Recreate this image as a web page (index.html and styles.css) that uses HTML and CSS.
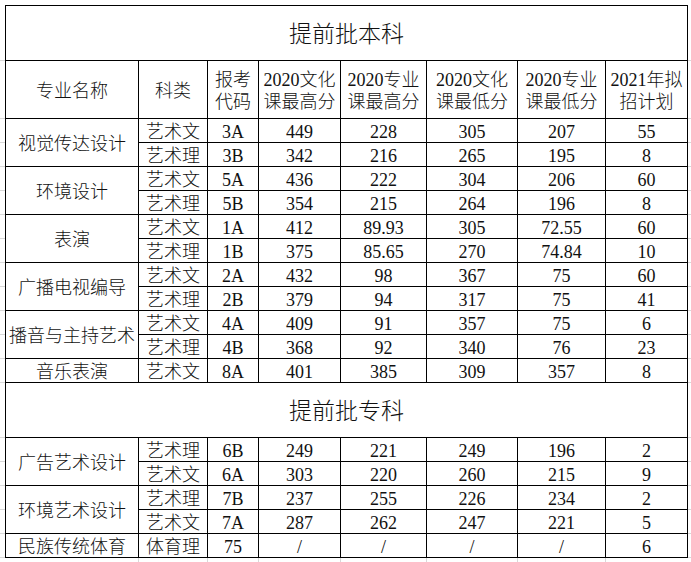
FILE: index.html
```html
<!DOCTYPE html>
<html lang="zh-CN">
<head>
<meta charset="utf-8">
<title>提前批招生计划</title>
<link rel="stylesheet" href="styles.css">
</head>
<body>
<div class="sheet">
<table class="plan">
  <colgroup>
    <col class="c-major"><col class="c-type"><col class="c-code"><col class="c-s1">
    <col class="c-s2"><col class="c-s3"><col class="c-s4"><col class="c-plan">
  </colgroup>
  <tbody>
    <tr class="r-title"><td colspan="8" class="title">提前批本科</td></tr>
    <tr class="r-head">
      <td>专业名称</td><td>科类</td><td>报考<br>代码</td><td>2020文化<br>课最高分</td>
      <td>2020专业<br>课最高分</td><td>2020文化<br>课最低分</td><td>2020专业<br>课最低分</td><td>2021年拟<br>招计划</td>
    </tr>
    <tr><td rowspan="2">视觉传达设计</td><td>艺术文</td><td>3A</td><td>449</td><td>228</td><td>305</td><td>207</td><td>55</td></tr>
    <tr><td>艺术理</td><td>3B</td><td>342</td><td>216</td><td>265</td><td>195</td><td>8</td></tr>
    <tr><td rowspan="2">环境设计</td><td>艺术文</td><td>5A</td><td>436</td><td>222</td><td>304</td><td>206</td><td>60</td></tr>
    <tr><td>艺术理</td><td>5B</td><td>354</td><td>215</td><td>264</td><td>196</td><td>8</td></tr>
    <tr><td rowspan="2">表演</td><td>艺术文</td><td>1A</td><td>412</td><td>89.93</td><td>305</td><td>72.55</td><td>60</td></tr>
    <tr><td>艺术理</td><td>1B</td><td>375</td><td>85.65</td><td>270</td><td>74.84</td><td>10</td></tr>
    <tr><td rowspan="2">广播电视编导</td><td>艺术文</td><td>2A</td><td>432</td><td>98</td><td>367</td><td>75</td><td>60</td></tr>
    <tr><td>艺术理</td><td>2B</td><td>379</td><td>94</td><td>317</td><td>75</td><td>41</td></tr>
    <tr><td rowspan="2">播音与主持艺术</td><td>艺术文</td><td>4A</td><td>409</td><td>91</td><td>357</td><td>75</td><td>6</td></tr>
    <tr><td>艺术理</td><td>4B</td><td>368</td><td>92</td><td>340</td><td>76</td><td>23</td></tr>
    <tr><td>音乐表演</td><td>艺术文</td><td>8A</td><td>401</td><td>385</td><td>309</td><td>357</td><td>8</td></tr>
    <tr class="r-title"><td colspan="8" class="title">提前批专科</td></tr>
    <tr><td rowspan="2">广告艺术设计</td><td>艺术理</td><td>6B</td><td>249</td><td>221</td><td>249</td><td>196</td><td>2</td></tr>
    <tr><td>艺术文</td><td>6A</td><td>303</td><td>220</td><td>260</td><td>215</td><td>9</td></tr>
    <tr><td rowspan="2">环境艺术设计</td><td>艺术理</td><td>7B</td><td>237</td><td>255</td><td>226</td><td>234</td><td>2</td></tr>
    <tr><td>艺术文</td><td>7A</td><td>287</td><td>262</td><td>247</td><td>221</td><td>5</td></tr>
    <tr><td>民族传统体育</td><td>体育理</td><td>75</td><td class="na">/</td><td class="na">/</td><td class="na">/</td><td class="na">/</td><td>6</td></tr>
  </tbody>
</table>
</div>
</body>
</html>
```

FILE: styles.css
```css
html, body {
  margin: 0;
  padding: 0;
  background: #fff;
}

.sheet {
  width: 691px;
  height: 562px;
  box-sizing: border-box;
  padding: 5px 0 0 5px;
  background-color: #fff;
  background-image:
    linear-gradient(#d8d8d8, #d8d8d8),
    repeating-linear-gradient(to bottom, #d8d8d8 0 1px, transparent 1px 24px),
    repeating-linear-gradient(to bottom, #d8d8d8 0 1px, transparent 1px 24px),
    linear-gradient(#d8d8d8, #d8d8d8),
    linear-gradient(#d8d8d8, #d8d8d8),
    linear-gradient(#d8d8d8, #d8d8d8),
    linear-gradient(#d8d8d8, #d8d8d8),
    linear-gradient(#d8d8d8, #d8d8d8),
    linear-gradient(#d8d8d8, #d8d8d8),
    linear-gradient(#d8d8d8, #d8d8d8);
  background-repeat: no-repeat;
  background-size:
    100% 1px,
    100% 265px,
    100% 121px,
    1px 5px, 1px 5px, 1px 5px, 1px 5px, 1px 5px, 1px 5px, 1px 5px;
  background-position:
    0 60px,
    0 118px,
    0 437px,
    138px 557px, 207px 557px, 258px 557px, 340px 557px, 426px 557px, 517px 557px, 605px 557px;
  font-family: "Liberation Serif", "Noto Sans CJK SC", serif;
  font-weight: 300;
  color: #111;
}

.plan {
  border-collapse: collapse;
  table-layout: fixed;
  width: 682px;
  background: #fff;
  font-size: 18px;
}

.c-major { width: 133px; }
.c-type { width: 69px; }
.c-code { width: 51px; }
.c-s1 { width: 82px; }
.c-s2 { width: 86px; }
.c-s3 { width: 91px; }
.c-s4 { width: 88px; }
.c-plan { width: 82px; }

.plan td {
  border: 1px solid #000;
  padding: 3px 0 0;
  text-align: center;
  vertical-align: middle;
  line-height: 20px;
  white-space: nowrap;
  height: 20px;
}

.plan .r-title td {
  height: 51px;
  font-size: 23px;
  line-height: 26px;
}

.plan .r-head td {
  height: 54px;
  line-height: 22px;
}
```
